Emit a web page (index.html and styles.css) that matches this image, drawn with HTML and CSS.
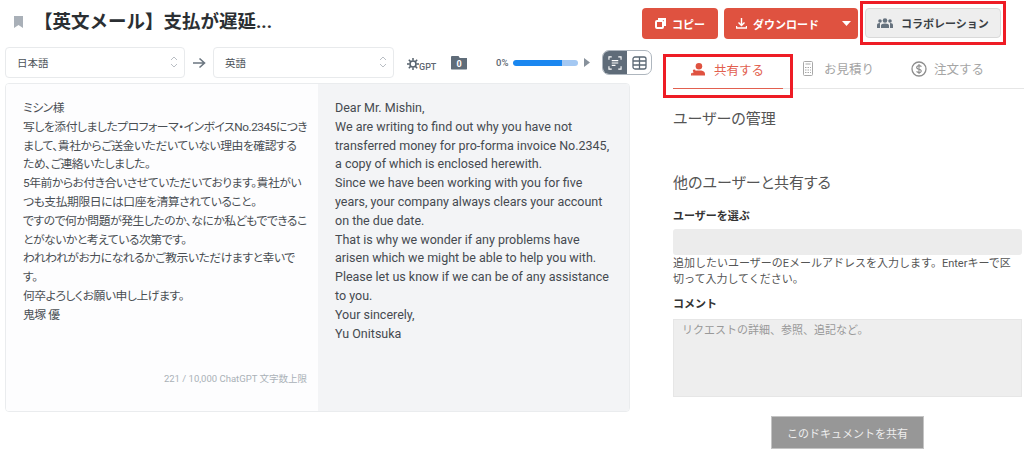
FILE: index.html
```html
<!DOCTYPE html>
<html lang="ja">
<head>
<meta charset="utf-8">
<title>英文メール</title>
<link rel="stylesheet" href="styles.css">
</head>
<body>
<div class="page">
  <main class="left">
    <header class="title-row">
      <svg class="bookmark" width="9" height="12" viewBox="0 0 9 12"><path d="M0 0h9v12L4.500 9 0 12z" fill="#a9b0b8"/></svg>
      <h1>【英文メール】支払が遅延...</h1>
    </header>
    <div class="tools">
      <div class="select sel-a"><span>日本語</span><svg class="updown" width="8" height="14" viewBox="0 0 8 14"><path d="M1 5l3-3 3 3M1 9l3 3 3-3" fill="none" stroke="#b9bec4" stroke-width="1"/></svg></div>
      <svg class="arrow" width="14" height="12" viewBox="0 0 14 12"><path d="M1 6h11M7.500 1.500L12.500 6l-5 4.500" fill="none" stroke="#6b7680" stroke-width="1.600"/></svg>
      <div class="select sel-b"><span>英語</span><svg class="updown" width="8" height="14" viewBox="0 0 8 14"><path d="M1 5l3-3 3 3M1 9l3 3 3-3" fill="none" stroke="#b9bec4" stroke-width="1"/></svg></div>
      <div class="gpt">
        <svg width="12" height="12" viewBox="0 0 12 12"><circle cx="6" cy="6" r="3" fill="none" stroke="#56616c" stroke-width="1.600"/><path d="M6 0v2.500M6 9.500V12M0 6h2.500M9.500 6H12M1.800 1.800l1.800 1.800M8.400 8.400l1.800 1.800M10.200 1.800L8.400 3.600M3.600 8.400l-1.800 1.800" stroke="#56616c" stroke-width="1.500"/></svg><span>GPT</span>
      </div>
      <div class="folder"><span>0</span></div>
      <div class="progress">
        <span class="pct">0%</span>
        <div class="bar"><div class="bar-fill"></div></div>
        <svg width="6" height="9" viewBox="0 0 6 9"><path d="M0 0l6 4.500L0 9z" fill="#87919b"/></svg>
      </div>
      <div class="toggle">
        <div class="tg on"><svg width="14" height="14" viewBox="0 0 15 15" fill="none" stroke="#fff" stroke-width="1.200"><path d="M1 4V1h3M11 1h3v3M14 11v3h-3M4 14H1v-3M4 5h7M4 7.500h7M4 10h4"/></svg></div>
        <div class="tg"><svg width="15" height="14" viewBox="0 0 15 14" fill="none" stroke="#5b6874" stroke-width="1.300"><rect x="1" y="1" width="13" height="12" rx="2"/><path d="M1 5h13M1 9h13M7.500 1v12"/></svg></div>
      </div>
    </div>
    <section class="panes">
      <div class="pane src">
        <p>ミシン様<br>写しを添付しましたプロフォーマ・インボイスNo.2345につき<br>まして、貴社からご送金いただいていない理由を確認する<br>ため、ご連絡いたしました。<br>5年前からお付き合いさせていただいております。貴社がい<br>つも支払期限日には口座を清算されていること。<br>ですので何か問題が発生したのか、なにか私どもでできるこ<br>とがないかと考えている次第です。<br>われわれがお力になれるかご教示いただけますと幸いで<br>す。<br>何卒よろしくお願い申し上げます。<br>鬼塚 優</p>
        <div class="count">221 / 10,000 ChatGPT 文字数上限</div>
      </div>
      <div class="pane dst">
        <p>Dear Mr. Mishin,<br>We are writing to find out why you have not transferred money for pro-forma invoice No.2345, a copy of which is enclosed herewith.<br>Since we have been working with you for five years, your company always clears your account on the due date.<br>That is why we wonder if any problems have arisen which we might be able to help you with.<br>Please let us know if we can be of any assistance to you.<br>Your sincerely,<br>Yu Onitsuka</p>
      </div>
    </section>
  </main>
  <aside class="right">
    <div class="actions">
      <button class="btn red copy"><svg width="11" height="11" viewBox="0 0 11 11"><path d="M3 0h8v8H9V2H3z" fill="#fff"/><rect x="1" y="3" width="7" height="7" rx="1" fill="none" stroke="#fff" stroke-width="2"/></svg>コピー</button>
      <button class="btn red dl"><svg width="11" height="11" viewBox="0 0 11 11" fill="none" stroke="#fff" stroke-width="1.400"><path d="M5.500 0v7M2.500 4.500l3 3 3-3M.5 8v2h10V8"/></svg><span class="dl-label">ダウンロード</span><svg class="caret" width="9" height="5" viewBox="0 0 9 5"><path d="M0 0h9L4.500 5z" fill="#fff"/></svg></button>
      <div class="hl hl-collab"><button class="btn collab"><svg width="16" height="10" viewBox="0 0 16 10" fill="#66727e"><circle cx="8" cy="2.500" r="2.300"/><circle cx="3" cy="3" r="1.800"/><circle cx="13" cy="3" r="1.800"/><path d="M4 10V7.500Q4 5.500 8 5.500t4 2V10zM0 9V7q0-2 3-2v5H0zM16 9V7q0-2-3-2v5h3z"/></svg>コラボレーション</button></div>
    </div>
    <nav class="tabs">
      <div class="hl hl-tab"><div class="tab active"><svg width="14" height="14" viewBox="0 0 15 14" fill="#df5240"><circle cx="8.500" cy="4" r="3.500"/><path d="M2 14v-2q0-2.500 4-3.500h5q4 1 4 3.500v2z"/><circle cx="3.500" cy="9" r="1.500"/><path d="M0 14v-1.500Q0 11 2 11v3z"/></svg>共有する</div></div>
      <div class="tab"><svg width="10" height="15" viewBox="0 0 10 15" fill="none" stroke="#a8a8a8"><rect x=".5" y=".5" width="9" height="14" rx="1"/><path d="M2.500 3h5M2 6.500h1.500M4.500 6.500H6M7 6.500h1M2 9h1.500M4.500 9H6M7 9h1M2 11.500h1.500M4.500 11.500H6M7 11.500h1"/></svg>お見積り</div>
      <div class="tab"><svg width="16" height="16" viewBox="0 0 16 16" fill="none" stroke="#8d8d8d" stroke-width="1.300"><circle cx="8" cy="8" r="7"/><path d="M10.500 5.500Q8 4 6.300 5.200T7 8l2 .5q2 1 .8 2.500T5.500 10.500M8 3v10" stroke-width="1.100"/></svg>注文する</div>
    </nav>
    <h2 class="manage">ユーザーの管理</h2>
    <h2 class="share">他のユーザーと共有する</h2>
    <label class="label first">ユーザーを選ぶ</label>
    <div class="input"></div>
    <p class="help">追加したいユーザーのEメールアドレスを入力します。Enterキーで区切って入力してください。</p>
    <label class="label second">コメント</label>
    <div class="textarea">リクエストの詳細、参照、追記など。</div>
    <div class="submit-row"><button class="submit">このドキュメントを共有</button></div>
  </aside>
</div>
</body>
</html>
```
FILE: styles.css
```css
* { box-sizing: border-box; }
html, body { margin: 0; padding: 0; }
body {
  width: 1024px;
  height: 457px;
  overflow: hidden;
  background: #fff;
  font-family: "Roboto", "Noto Sans CJK JP", sans-serif;
  color: #333;
}
.page { display: flex; height: 457px; }
.left { width: 673px; padding-left: 5px; flex: none; }
.right { flex: 1; min-width: 0; position: relative; }

.title-row { display: flex; align-items: center; height: 47px; padding: 0 0 3px 9px; }
.bookmark { flex: none; margin-top: -1px; }
.title-row h1 {
  margin: 0 0 0 11px;
  font-size: 18.500px;
  font-weight: 700;
  color: #2b2f33;
  line-height: 24px;
  white-space: nowrap;
}

.tools { display: flex; align-items: center; height: 31px; }
.select {
  height: 31px;
  background: #fff;
  border: 1px solid #e8eaec;
  border-radius: 4px;
  display: flex;
  align-items: center;
  justify-content: space-between;
  padding: 0 6px 1px 11px;
  font-size: 10.500px;
  color: #4b5157;
}
.sel-a { width: 180px; }
.sel-b { width: 181px; }
.arrow { margin: 0 7px 0 7px; flex: none; }
.gpt { display: flex; align-items: flex-end; margin-left: 13px; width: 31px; height: 15px; color: #5d6771; }
.gpt span { font-size: 9px; font-weight: 500; line-height: 10px; margin-bottom: -2px; }
.folder {
  width: 16px; height: 14px; margin-left: 13px;
  background: #5f6c79;
  border-radius: 1px;
  clip-path: polygon(0 0, 45% 0, 55% 18%, 100% 18%, 100% 100%, 0 100%);
  color: #fff; font-size: 9px; font-weight: 700;
  display: flex; align-items: center; justify-content: center; padding-top: 3px;
}
.progress { display: flex; align-items: center; margin-left: 29px; width: 95px; }
.pct { font-size: 9.500px; font-weight: 500; color: #5d6771; width: 17px; }
.bar { width: 65px; height: 6px; border-radius: 3px; background: #a4c8f2; margin-right: 6px; overflow: hidden; }
.bar-fill { width: 49px; height: 6px; background: #1a87f0; border-radius: 3px 0 0 3px; }
.toggle {
  display: flex; height: 25px; width: 50px; margin-left: 11px;
  border: 1px solid #aeb6be; border-radius: 7px; overflow: hidden;
}
.tg { flex: 1; display: flex; align-items: center; justify-content: center; }
.tg.on { background: #5f6c79; }

.panes {
  display: flex;
  width: 625px;
  height: 329px;
  margin-top: 5px;
  border: 1px solid #eaecee;
  border-radius: 4px;
  overflow: hidden;
  font-size: 12.500px;
  line-height: 18.800px;
  color: #4a4f54;
}
.pane p { margin: 0; }
.src { width: 312px; background: #fdfdfe; padding: 15px 5px 0 17px; position: relative; font-feature-settings: "palt"; }
.src p { font-size: 11.800px; letter-spacing: -0.450px; white-space: nowrap; }
.dst { flex: 1; background: #f3f4f6; padding: 15px 14px 0 17px; color: #454a50; }
.count {
  position: absolute; right: 11px; bottom: 26px;
  font-size: 9.500px; line-height: 12px; color: #aab1b7;
}

.actions { display: flex; align-items: flex-start; padding-top: 8px; height: 48px; margin-left: -31px; }
.btn {
  height: 31px; border: 0; border-radius: 4px; font-family: inherit; font-size: 11px; font-weight: 700;
  display: flex; align-items: center; padding: 0; cursor: pointer;
}
.red { background: #df5240; color: #fff; }
.copy { width: 76px; padding-left: 13px; gap: 6px; }
.dl { width: 134px; margin-left: 6px; padding-left: 12px; position: relative; }
.dl-label { margin-left: 6px; }
.caret { position: absolute; right: 7px; top: 13px; }
.hl { border: 3px solid #ee1c25; }
.hl-collab { position: absolute; left: 187px; top: 1px; width: 146px; height: 44px; padding: 4px 2px; }
.collab {
  width: 136px; height: 30px;
  background: #eeeeee; border: 1px solid #d9d9d9; color: #3a3f44; gap: 8px; padding-left: 11px;
}
.tabs { display: flex; height: 41px; border-bottom: 1px solid #e6e6e6; position: relative; }
.tab {
  display: flex; align-items: center; gap: 11px; font-size: 12.500px; color: #a5a5a5; padding-top: 1px; height: 40px;
}
.tabs > .tab:nth-child(2) { margin-left: 130px; }
.tabs > .tab:nth-child(3) { margin-left: 37px; gap: 7px; }
.hl-tab { position: absolute; left: -10px; top: 6px; width: 130px; height: 44px; }
.tab.active {
  color: #e2604f; height: 32px; width: 110px; margin-left: 7px; padding: 0 0 7px 18px; gap: 9px;
  border-bottom: 1px solid #e2604f;
}

.manage { margin: 20px 0 0; font-size: 15px; font-weight: 400; line-height: 20px; color: #555; font-feature-settings: "palt"; }
.share { margin: 44px 0 0; font-size: 15px; font-weight: 400; line-height: 20px; color: #555; font-feature-settings: "palt"; }
.label { display: block; font-size: 11px; font-weight: 700; color: #333; line-height: 14px; }
.first { margin-top: 17px; }
.second { margin-top: 10px; }
.input { margin-top: 5px; width: 349px; height: 26px; background: #ececec; border-radius: 3px; }
.help { margin: 1px 0 0; width: 345px; font-size: 11px; line-height: 16px; color: #555; }
.textarea {
  margin-top: 7px; width: 349px; height: 78px; background: #eeeeee; border: 1px solid #e6e6e6;
  padding: 4px 8px; font-size: 11px; line-height: 14px; color: #999;
}
.submit-row { margin-top: 19px; display: flex; padding-left: 98px; }
.submit {
  width: 153px; height: 33px; background: #979797; border: 1px solid #c4c4c4; color: #eee;
  font-family: inherit; font-size: 11px; padding: 0;
}
```
